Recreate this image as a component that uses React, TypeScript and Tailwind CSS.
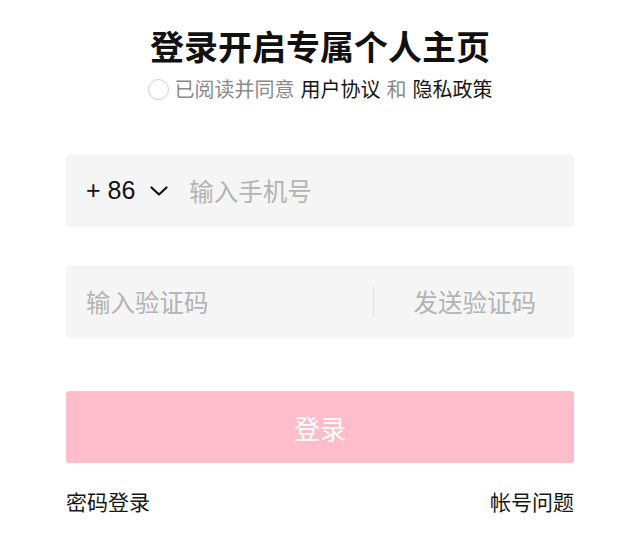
import React, { useState } from "react";

const CJK = "font-['PingFang_SC','Noto_Sans_CJK_SC',sans-serif]";

function Chevron() {
  return (
    <svg width="18" height="10" viewBox="0 0 18 10" fill="none" className="shrink-0">
      <path d="M1.5 1.5 L9 8.5 L16.5 1.5" stroke="#111" strokeWidth="2.2" strokeLinecap="round" strokeLinejoin="round" />
    </svg>
  );
}

export default function App() {
  const [agreed, setAgreed] = useState(false);
  const [phone, setPhone] = useState("");
  const [code, setCode] = useState("");

  return (
    <div className={`min-h-[543px] w-full bg-white ${CJK}`}>
      <div className="mx-auto w-[508px] pt-[26px]">
        <h1 className="text-center text-[34px] leading-[40px] font-bold text-[#111]">
          登录开启专属个人主页
        </h1>

        <div className="mt-[9px] flex h-[28px] items-center justify-center text-[20px] leading-[28px]">
          <button
            onClick={() => setAgreed((v) => !v)}
            className={`mr-[6px] h-[21px] w-[21px] shrink-0 rounded-full border ${
              agreed ? "border-[#fe2c55] bg-[#fe2c55]" : "border-[#cfcfcf] bg-white"
            }`}
          />
          <span className="text-[#8a8a8a]">已阅读并同意</span>
          <span className="ml-[6px] text-[#161616]">用户协议</span>
          <span className="ml-[6px] text-[#8a8a8a]">和</span>
          <span className="ml-[6px] text-[#161616]">隐私政策</span>
        </div>

        <div className="mt-[52px] flex h-[72px] items-center rounded-[3px] bg-[#f5f5f6] px-[20px]">
          <span className="font-['Liberation_Sans',sans-serif] text-[25px] text-[#111] whitespace-pre">+ 86</span>
          <span className="ml-[15px]">
            <Chevron />
          </span>
          <input
            value={phone}
            onChange={(e) => setPhone(e.target.value)}
            placeholder="输入手机号"
            className={`ml-[21px] min-w-0 flex-1 bg-transparent text-[24.5px] text-[#111] outline-none placeholder:text-[#b3b3b3] ${CJK}`}
          />
        </div>

        <div className="mt-[39px] flex h-[72px] items-center rounded-[3px] bg-[#f5f5f6] pl-[20px]">
          <input
            value={code}
            onChange={(e) => setCode(e.target.value)}
            placeholder="输入验证码"
            className={`min-w-0 flex-1 bg-transparent text-[24.5px] text-[#111] outline-none placeholder:text-[#b3b3b3] ${CJK}`}
          />
          <div className="h-[30px] w-px bg-[#e2e2e2]" />
          <button className="pl-[40px] pr-[38px] text-[24.5px] text-[#b3b3b3]">发送验证码</button>
        </div>

        <button className="mt-[53px] flex h-[72px] w-full items-center justify-center rounded-[3px] bg-[#febdca] text-[26px] text-white">
          登录
        </button>

        <div className="mt-[24px] flex h-[28px] items-center justify-between text-[21px] leading-[28px] text-[#161616]">
          <span>密码登录</span>
          <span>帐号问题</span>
        </div>
      </div>
    </div>
  );
}
